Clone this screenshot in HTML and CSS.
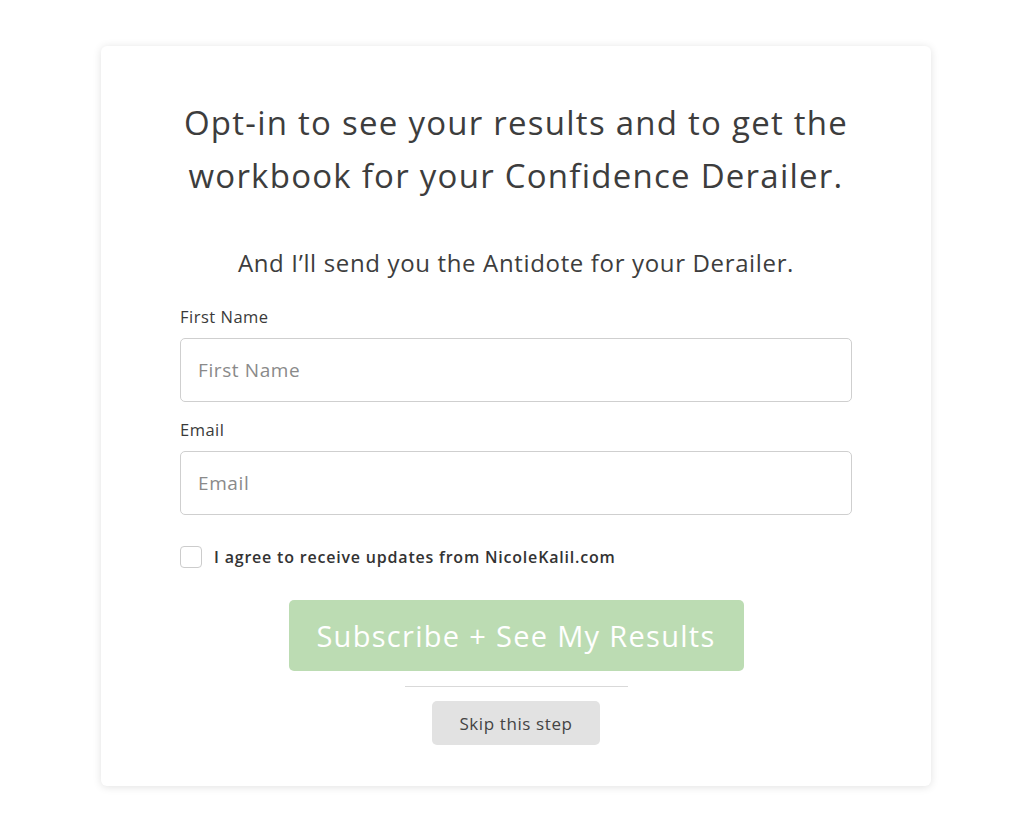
FILE: index.html
```html
<!DOCTYPE html>
<html>
<head>
<meta charset="utf-8">
<link rel="stylesheet" href="styles.css">
</head>
<body>
<div class="page">
  <div class="card">
    <h1 class="title">Opt-in to see your results and to get the workbook for your Confidence Derailer.</h1>
    <p class="subtitle">And I’ll send you the Antidote for your Derailer.</p>
    <form class="form">
      <label class="label" for="fn">First Name</label>
      <input class="input" id="fn" type="text" placeholder="First Name">
      <label class="label" for="em">Email</label>
      <input class="input" id="em" type="text" placeholder="Email">
      <label class="agree"><span class="box"></span><span>I agree to receive updates from NicoleKalil.com</span></label>
      <div class="actions">
        <button type="button" class="primary">Subscribe + See My Results</button>
        <div class="divider"></div>
        <button type="button" class="skip">Skip this step</button>
      </div>
    </form>
  </div>
</div>
</body>
</html>
```
FILE: styles.css
```css
* { box-sizing: border-box; }
html, body { margin: 0; padding: 0; background: #fff; }
body { font-family: "Open Sans", Lato, sans-serif; color: #444; }
.page { padding: 46px 93px 46px 101px; }
.card {
  width: 830px;
  height: 740px;
  background: #fff;
  border-radius: 6px;
  box-shadow: 0 1px 8px rgba(0,0,0,0.12);
  padding: 50px 50px 0;
}
.title {
  margin: 0;
  font-weight: 400;
  font-size: 33px;
  line-height: 53px;
  letter-spacing: 1.25px;
  text-align: center;
  color: #3d3d3d;
}
.subtitle {
  margin: 44px 0 0;
  font-size: 24px;
  line-height: 34px;
  letter-spacing: 0.65px;
  text-align: center;
  color: #3d3d3d;
}
.form { display: flex; flex-direction: column; margin: 25px 29px 0; }
.label { font-size: 16.5px; line-height: 24px; letter-spacing: 0.5px; color: #3a3a3a; }
.input {
  margin-top: 9px;
  margin-bottom: 16px;
  height: 64px;
  border: 1px solid #cfcfcf;
  border-radius: 5px;
  padding: 0 17px;
  font-family: inherit;
  font-size: 19px;
  letter-spacing: 0.6px;
  color: #333;
  outline: none;
}
.input::placeholder { color: #8a8a8a; }
.agree {
  display: flex;
  align-items: center;
  gap: 12px;
  margin-top: 15px;
  font-size: 16px;
  font-weight: 600;
  letter-spacing: 0.8px;
  color: #333;
}
.box {
  width: 22px;
  height: 22px;
  border: 1px solid #cccccc;
  border-radius: 4px;
  background: #fff;
}
.actions { display: flex; flex-direction: column; align-items: center; margin-top: 32px; }
.primary {
  width: 455px;
  height: 71px;
  border: none;
  border-radius: 5px;
  background: #bcdcb3;
  color: #fff;
  font-family: inherit;
  font-size: 29px;
  letter-spacing: 1.3px;
}
.divider { width: 223px; height: 1px; background: #d9d9d9; margin-top: 15px; }
.skip {
  margin-top: 14px;
  width: 168px;
  height: 44px;
  border: none;
  border-radius: 5px;
  background: #e2e2e2;
  color: #444;
  font-family: inherit;
  font-size: 17px;
  letter-spacing: 0.6px;
}
```
